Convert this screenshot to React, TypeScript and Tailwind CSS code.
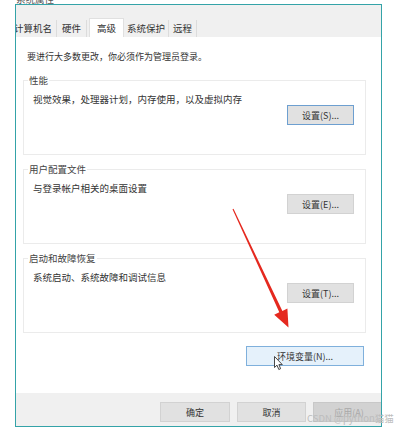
import React from "react";

const font = { fontFamily: '"Noto Sans CJK SC", "Noto Sans", sans-serif' };

function Btn({ label, variant = "normal", className = "" }: { label: string; variant?: "normal" | "focus" | "hover" | "disabled"; className?: string }) {
  const v =
    variant === "focus"
      ? "bg-[#e1e1e1] border-[#6d9fd0]"
      : variant === "hover"
      ? "bg-[#e5f1fb] border-[#7fb0dc]"
      : variant === "disabled"
      ? "bg-[#d2d2d2] border-[#c8c8c8] text-[#a8a8a8]"
      : "bg-[#e1e1e1] border-[#d2d2d2]";
  return (
    <div className={`h-[20px] border flex items-center justify-center text-[9px] leading-none text-[#333] ${v} ${className}`}>
      {label}
    </div>
  );
}

function Group({ title, desc, btn, focus = false }: { title: string; desc: string; btn: string; focus?: boolean }) {
  return (
    <fieldset className="border border-[#ebebeb] pl-[9px] pr-[11px] pb-[9px] h-[81px] flex flex-col">
      <legend className="ml-[-5px] px-[1px] text-[9.5px] leading-[12px] text-[#444]">{title}</legend>
      <div className="mt-[7px] text-[9.5px] leading-[12px] text-[#333]">{desc}</div>
      <div className="mt-auto flex justify-end">
        <Btn label={btn} variant={focus ? "focus" : "normal"} className="w-[67px]" />
      </div>
    </fieldset>
  );
}

export default function App() {
  return (
    <div className="w-[396px] h-[430px] bg-white relative overflow-hidden" style={font}>
      <div className="h-[4px] overflow-hidden pl-[16px]">
        <div className="-mt-[7px] text-[9.5px] leading-[12px] text-[#555]">系统属性</div>
      </div>
      <div className="ml-[15px] w-[367px] h-[423px] border border-[#34a3a8] flex flex-col overflow-hidden">
        {/* tab bar */}
        <div className="bg-[#f0f0f0] h-[32px] flex items-end text-[9.5px] text-[#333]">
          <div className="-ml-[6px] w-[47px] h-[17px] flex items-center justify-center border-r border-[#dcdcdc]">计算机名</div>
          <div className="w-[30px] h-[17px] flex items-center justify-center border-r border-[#dcdcdc]">硬件</div>
          <div className="ml-[2px] w-[35px] h-[19px] flex items-center justify-center bg-white border border-b-0 border-[#e0e0e0]">高级</div>
          <div className="w-[45px] h-[17px] flex items-center justify-center border-r border-[#dcdcdc]">系统保护</div>
          <div className="w-[28px] h-[17px] flex items-center justify-center border-r border-[#dcdcdc]">远程</div>
        </div>
        {/* content */}
        <div className="flex-1 flex flex-col px-[7px] pt-[14px]">
          <div className="ml-[4px] text-[9px] leading-[12px] text-[#333]">要进行大多数更改，你必须作为管理员登录。</div>
          <div className="mt-[11px] mr-[8px] flex flex-col gap-[8px]">
            <Group title="性能" desc="视觉效果，处理器计划，内存使用，以及虚拟内存" btn="设置(S)..." focus />
            <Group title="用户配置文件" desc="与登录帐户相关的桌面设置" btn="设置(E)..." />
            <Group title="启动和故障恢复" desc="系统启动、系统故障和调试信息" btn="设置(T)..." />
          </div>
          <div className="mt-[13px] flex justify-end mr-[10px]">
            <Btn label="环境变量(N)..." variant="hover" className="w-[118px]" />
          </div>
        </div>
        {/* footer */}
        <div className="h-[33px] bg-[#f0f0f0] flex items-start pt-[9px] pl-[144px] gap-[7px]">
          <Btn label="确定" className="w-[70px] shrink-0" />
          <Btn label="取消" className="w-[69px] shrink-0" />
          <Btn label="应用(A)" variant="disabled" className="w-[72px] shrink-0" />
        </div>
      </div>

      {/* red arrow annotation */}
      <svg className="absolute inset-0 pointer-events-none" width="396" height="430" viewBox="0 0 396 430">
        <polygon
          points="232.5,209.2 233.5,208.8 282.4,311 287.4,308.4 288.5,327.5 274.2,314.8 279.3,312.3"
          fill="#e5291f"
        />
      </svg>

      {/* mouse cursor */}
      <svg className="absolute left-[274px] top-[356px]" width="10" height="15" viewBox="0 0 10 15">
        <path d="M0.5 0.5 L0.5 11.5 L3 9.2 L4.8 13.5 L6.6 12.7 L4.9 8.6 L8.3 8.6 Z" fill="#fff" stroke="#333" strokeWidth="0.9" strokeLinejoin="round" />
      </svg>

      {/* watermark */}
      <div className="absolute left-[307px] top-[412px] text-[9.5px] leading-[12px] text-[#bdbdbd] whitespace-nowrap">CSDN @python猫猫</div>
    </div>
  );
}
